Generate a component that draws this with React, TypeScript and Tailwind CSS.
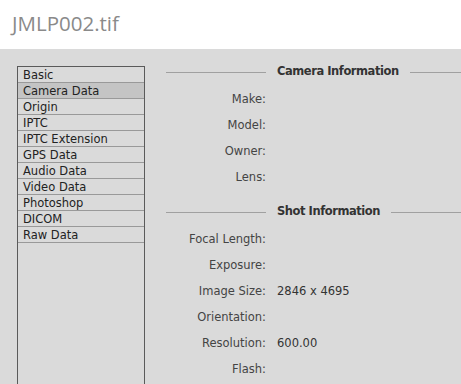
const tabs = [
  "Basic",
  "Camera Data",
  "Origin",
  "IPTC",
  "IPTC Extension",
  "GPS Data",
  "Audio Data",
  "Video Data",
  "Photoshop",
  "DICOM",
  "Raw Data",
];

const camera: [string, string][] = [
  ["Make:", ""],
  ["Model:", ""],
  ["Owner:", ""],
  ["Lens:", ""],
];

const shot: [string, string][] = [
  ["Focal Length:", ""],
  ["Exposure:", ""],
  ["Image Size:", "2846 x 4695"],
  ["Orientation:", ""],
  ["Resolution:", "600.00"],
  ["Flash:", ""],
];

const Section = ({ title, rows }: { title: string; rows: [string, string][] }) => (
  <div>
    <div className="flex items-center h-[20px]">
      <div className="w-[100px] h-px bg-[#a0a0a0]" />
      <span className="px-[11px] font-bold text-[11.5px] tracking-[-0.45px] text-[#333]">{title}</span>
      <div className="flex-1 h-px bg-[#a0a0a0]" />
    </div>
    <div className="mt-[5px]">
      {rows.map(([label, value]) => (
        <div key={label} className="flex items-center h-[26px] text-[11.5px]">
          <span className="w-[100px] text-right text-[#444]">{label}</span>
          <span className="pl-[11px] text-[#333]">{value}</span>
        </div>
      ))}
    </div>
  </div>
);

const App = () => {
  return (
    <div className="w-[461px] h-[384px] overflow-hidden bg-[#dadada]" style={{ fontFamily: "Tahoma, 'DejaVu Sans', sans-serif" }}>
      <div className="h-[49px] bg-white flex items-center pl-[12px] pb-[2px]">
        <span className="text-[20.5px] text-[#8a8a8a]" style={{ fontFamily: "'Open Sans', sans-serif" }}>
          JMLP002.tif
        </span>
      </div>
      <div className="flex">
        <div className="ml-[17px] mt-[17px] w-[128px] h-[400px] border border-[#5a5a5a] border-b-0">
          {tabs.map((t) => (
            <div
              key={t}
              className={
                "h-[16px] border-b border-[#999] pl-[5px] text-[11.5px] leading-[16px] text-[#222] " +
                (t === "Camera Data" ? "bg-[#c4c4c4]" : "")
              }
            >
              {t}
            </div>
          ))}
        </div>
        <div className="flex-1 ml-[21px] mt-[13px] flex flex-col gap-[11px]">
          <Section title="Camera Information" rows={camera} />
          <Section title="Shot Information" rows={shot} />
        </div>
      </div>
    </div>
  );
};

export default App;
